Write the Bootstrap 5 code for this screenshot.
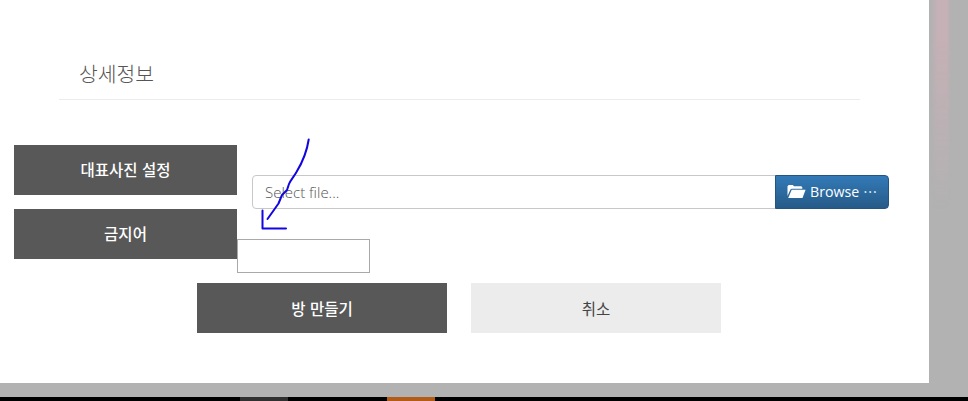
<!DOCTYPE html>
<html lang="ko">
<head>
<meta charset="utf-8">
<meta name="viewport" content="width=device-width, initial-scale=1">
<title>상세정보</title>
<link href="https://cdn.jsdelivr.net/npm/bootstrap@5.3.0/dist/css/bootstrap.min.css" rel="stylesheet">
<style>
body{background:#b2b2b2;font-family:"Noto Sans","Noto Sans CJK KR",sans-serif;font-size:15px;height:401px}
.side-tint{background:linear-gradient(to right,rgba(178,178,178,0),rgba(198,176,182,.9) 30%,rgba(198,176,182,.9) 80%,rgba(178,178,178,0));-webkit-mask-image:linear-gradient(#000 20%,transparent);width:20px;height:210px;margin-left:2px}
.panel{width:929px;height:383px;padding-top:50px}
.section-title{width:801px;height:50px;margin-left:59px;padding:7px 20px 0;border-bottom:1px solid #ececec;font:300 20.4px/32px "Noto Sans CJK KR",sans-serif;color:#555}
.form-area{margin-top:45px;padding-left:14px}
.tile{height:50px;border:0;border-radius:0;padding:0;font:500 15.5px/49px "Noto Sans CJK KR",sans-serif}
.tile-dark,.tile-dark:hover{background:#585858;color:#fff}
.tile-light,.tile-light:hover{background:#ececec;color:#444;font-weight:400}
.tile-label{width:223px;line-height:48px}
.tile-action{width:250px}
.file-group{width:637px;height:34px;margin:30px 0 0 15px}
.file-group .form-control{height:34px;padding:0 12px;font:300 15px "Open Sans","Noto Sans",sans-serif;border-color:#c8c8c8;border-radius:4px}
.file-group .form-control::placeholder{color:#555;opacity:1}
.btn-browse,.btn-browse:hover{width:114px;height:34px;padding:0 0 2px;color:#fff;background:linear-gradient(#337ab7,#265a88);border:1px solid #245580;border-radius:4px;font:400 14.2px "Open Sans","Noto Sans",sans-serif}
.word-input{width:133px;height:34px;margin-top:30px;border:1px solid #a9a9a9;border-radius:0;padding:4px 8px}
.actions{gap:24px;padding-left:197px;margin-top:10px}
.taskbar{height:4px;background:#000;margin-top:14px}
.task{width:48px;height:4px}
.pen{left:0;top:0;pointer-events:none;z-index:10}
</style>
<script src="https://cdn.jsdelivr.net/npm/bootstrap@5.3.0/dist/js/bootstrap.bundle.min.js"></script>
</head>
<body class="position-relative overflow-hidden">
<div class="d-flex">
  <main class="panel bg-white flex-shrink-0">
    <h2 class="section-title mb-0">상세정보</h2>
    <form class="m-0">
      <div class="form-area">
        <div class="d-flex align-items-start">
          <div class="tile tile-dark tile-label text-center flex-shrink-0">대표사진 설정</div>
          <div class="input-group file-group flex-nowrap">
            <input class="form-control" type="text" placeholder="Select file..." aria-label="Select file">
            <button class="btn btn-browse d-flex align-items-center justify-content-center" type="button">
              <svg class="me-1" width="19" height="15" viewBox="0 0 19 15" fill="#fff" aria-hidden="true"><path d="M0.500 12V2.200L1.700 1H5.800L7 2.300H14.300L15.300 3.300V4.700H4.600L3.400 5.500Z"/><path d="M4.700 5.800H18.600L15.500 14H1.200Z"/></svg>
              <span>Browse ⋯</span>
            </button>
          </div>
        </div>
        <div class="d-flex align-items-start word-row">
          <div class="tile tile-dark tile-label text-center flex-shrink-0">금지어</div>
          <input class="word-input" type="text" aria-label="금지어">
        </div>
      </div>
      <div class="d-flex actions">
        <button class="btn tile tile-dark tile-action" type="button">방 만들기</button>
        <button class="btn tile tile-light tile-action" type="button">취소</button>
      </div>
    </form>
  </main>
  <div class="side-tint"></div>
</div>
<footer class="taskbar d-flex">
  <div class="task" style="margin-left:240px;background:#303030"></div>
  <div class="task" style="margin-left:99px;background:#b35c18"></div>
</footer>
<svg class="pen position-absolute" width="968" height="401" fill="none" stroke="#1205e0" stroke-width="2" stroke-linecap="round" stroke-linejoin="round" aria-hidden="true">
  <path d="M308.700 139.500C307 151 302 163 296.500 172C293 178 290.500 180 289 184L287 190L282 195L278.500 203.500L272.500 212L267.500 219"/>
  <path d="M262.500 210.500V228.500H286"/>
</svg>
</body>
</html>
